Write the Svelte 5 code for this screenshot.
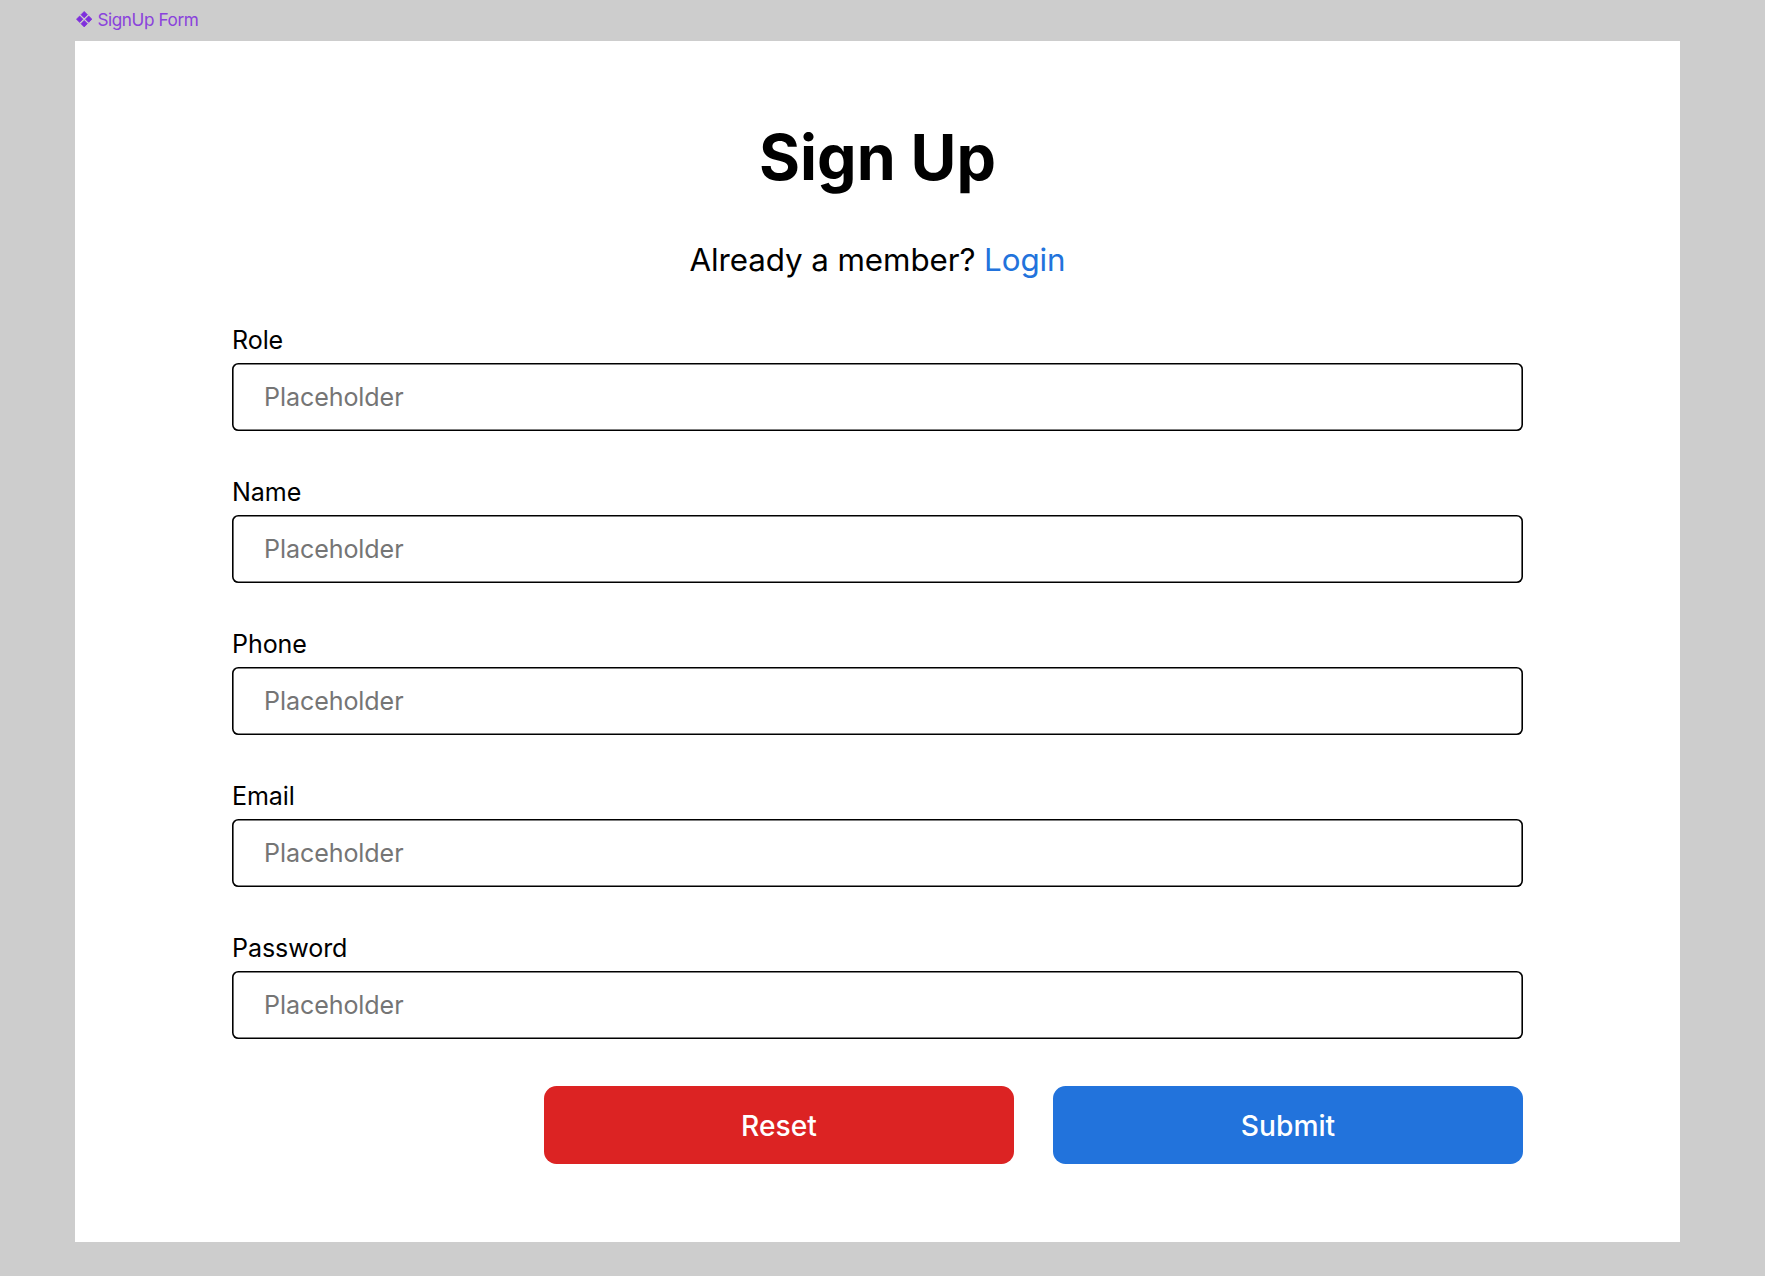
<script>
  const fields = ['Role', 'Name', 'Phone', 'Email', 'Password'];
</script>

<div class="canvas">
  <div class="layer">
    <svg viewBox="0 0 16 16" width="16.4" height="16.4" aria-hidden="true">
      <path d="M8 .5 11.1 3.6 8 6.7 4.9 3.6ZM8 9.3 11.1 12.4 8 15.5 4.9 12.4ZM3.6 4.9 6.7 8 3.6 11.1 .5 8ZM12.4 4.9 15.5 8 12.4 11.1 9.3 8Z" />
    </svg>
    <span>SignUp Form</span>
  </div>
  <form class="card">
    <h1>Sign Up</h1>
    <p>Already a member? <a href="#login">Login</a></p>
    <div class="fields">
      {#each fields as field}
        <label>
          <span>{field}</span>
          <input type="text" placeholder="Placeholder" />
        </label>
      {/each}
    </div>
    <div class="actions">
      <button class="reset" type="reset">Reset</button>
      <button class="submit" type="button">Submit</button>
    </div>
  </form>
</div>

<style>
  :global(body) {
    margin: 0;
    background: #cdcdcd;
  }
  .canvas {
    box-sizing: border-box;
    height: 1276px;
    padding-left: 75px;
    font-family: Inter, sans-serif;
    color: #000;
    background: #cdcdcd;
    overflow: hidden;
  }
  .layer {
    box-sizing: border-box;
    display: flex;
    align-items: center;
    gap: 5px;
    height: 41px;
    padding: 0 0 2px 1px;
    color: #8a42dc;
    font-size: 17.2px;
    line-height: 20px;
    letter-spacing: -0.42px;
  }
  .layer svg {
    fill: #7f2fdd;
    stroke: #7f2fdd;
    stroke-width: 0.8;
    stroke-linejoin: round;
  }
  .card {
    box-sizing: border-box;
    display: flex;
    flex-direction: column;
    width: 1605px;
    height: 1201px;
    padding: 78px 157px;
    background: #fff;
  }
  h1 {
    margin: 0;
    font-size: 62.7px;
    line-height: 76px;
    font-weight: 700;
    text-align: center;
  }
  p {
    margin: 46px 0 0;
    font-size: 31.35px;
    line-height: 38px;
    letter-spacing: -0.09px;
    text-align: center;
  }
  a {
    color: #2273dc;
    text-decoration: none;
  }
  .fields {
    display: flex;
    flex-direction: column;
    gap: 46px;
    margin-top: 46px;
  }
  label {
    display: flex;
    flex-direction: column;
    gap: 8px;
    font-size: 25.07px;
    line-height: 30px;
    letter-spacing: -0.08px;
  }
  input {
    box-sizing: border-box;
    width: 100%;
    height: 68px;
    padding: 0 32px;
    border: 0;
    border-radius: 6.3px;
    outline: 0;
    background: #fff;
    box-shadow: inset 0 0 0 1.6px #000;
    font: inherit;
    letter-spacing: inherit;
  }
  input::placeholder {
    color: #757575;
    opacity: 1;
  }
  .actions {
    display: flex;
    justify-content: flex-end;
    gap: 39px;
    margin-top: 47px;
  }
  button {
    width: 470px;
    height: 78px;
    padding: 2px 0 0;
    border: 0;
    border-radius: 12.5px;
    color: #fff;
    font: 500 28.2px/34px Inter, sans-serif;
  }
  .reset {
    background: #dc2323;
  }
  .submit {
    background: #2273dc;
  }
</style>
